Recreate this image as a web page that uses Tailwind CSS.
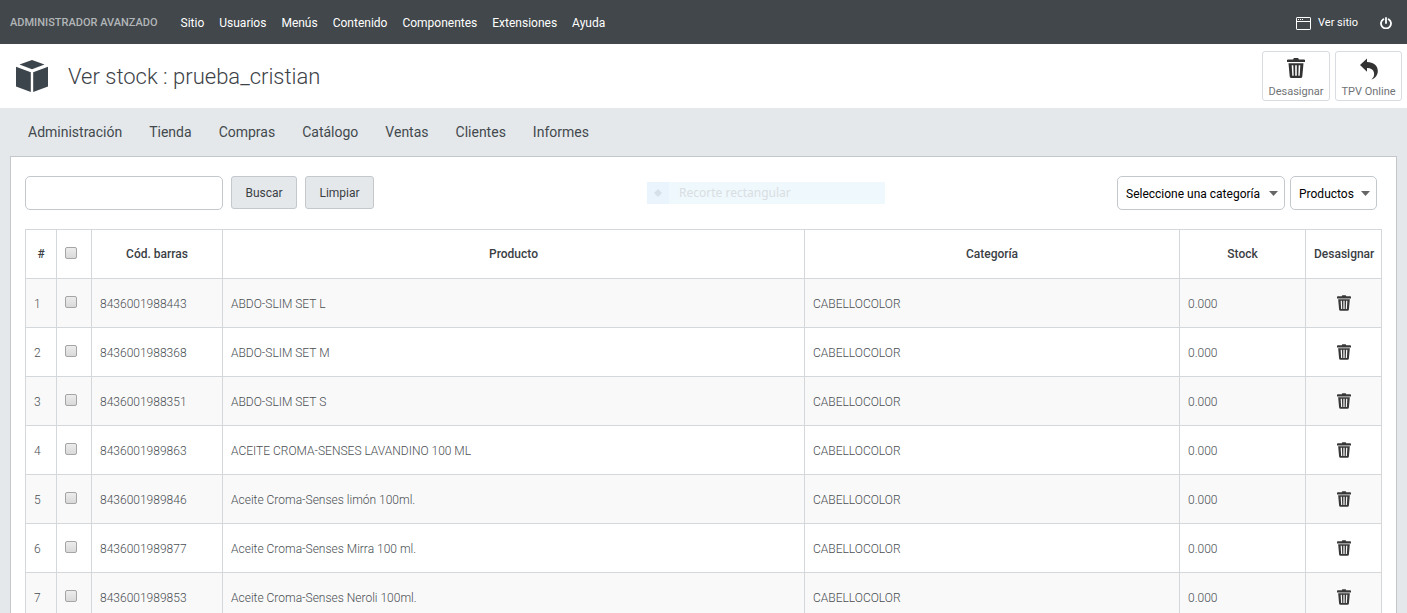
<!DOCTYPE html>
<html lang="es">
<head>
<meta charset="utf-8">
<meta name="viewport" content="width=device-width, initial-scale=1">
<title>Ver stock : prueba_cristian</title>
<script src="https://cdn.jsdelivr.net/npm/@tailwindcss/browser@4"></script>
</head>
<body class="min-h-screen bg-[#e4e8eb] font-['Roboto','Liberation_Sans',sans-serif] text-xs text-[#3b4045]">
<svg class="hidden" aria-hidden="true">
  <symbol id="trash" viewBox="0 0 18 20">
    <path fill="currentColor" fill-rule="evenodd" d="M6.500.5Q6.700 0 7.200 0h3.600q.5 0 .7.500l.300.9h5.200q1 0 1 .9v1.800H0V2.300q0-.9 1-.9h5.200zM1.500 5.300h15L15.300 18.400Q15.100 20 13.600 20H4.400Q2.900 20 2.700 18.400zM4.700 7.200l.6 10.500h1.400L6.300 7.200zM8.200 7.200v10.500h1.600V7.200zM11.700 7.200l-.4 10.500h1.400l.6-10.500z"/>
  </symbol>
</svg>

<header class="flex h-11 items-center bg-[#41474b] pt-0.5 text-white">
  <span class="ml-[10px] text-[11px] font-medium whitespace-nowrap text-[#b3b6b8]">ADMINISTRADOR AVANZADO</span>
  <nav class="ml-[23px] flex gap-[15px]" aria-label="Principal">
    <a href="#">Sitio</a>
    <a href="#">Usuarios</a>
    <a href="#">Menús</a>
    <a href="#">Contenido</a>
    <a href="#">Componentes</a>
    <a href="#">Extensiones</a>
    <a href="#">Ayuda</a>
  </nav>
  <a href="#" class="ml-auto flex items-center gap-[7px] text-[11px]">
    <svg class="h-[13px] w-[15px]" viewBox="0 0 15 13" fill="none" stroke="#fff" aria-hidden="true"><rect x=".5" y=".5" width="14" height="12" rx=".6"/><path d="M1 4.500h13M2 2.500h1M4 2.500h1M6 2.500h1"/></svg>
    Ver sitio
  </a>
  <button type="button" class="mr-[15px] ml-[22px]" aria-label="Cerrar sesión">
    <svg class="block size-3" viewBox="0 0 12 12" fill="none" stroke="#fff" stroke-width="1.800" stroke-linecap="round" aria-hidden="true"><path d="M6 1v5M3.400 2.200a5 5 0 1 0 5.200 0"/></svg>
  </button>
</header>

<div class="flex h-16 items-center bg-white pr-[5px] pl-4">
  <svg class="size-8" viewBox="0 0 32 32" fill="#3d454c" aria-hidden="true"><path d="M16 0l12.500 4.600L16 9.300 3.500 4.600zM0 6.800l14.800 5.500V32L0 26.400zM32 6.800l-14.800 5.500V32L32 26.400z"/></svg>
  <h1 class="ml-5 pt-0.5 text-[22px] leading-7 font-light text-[#3d4247]">Ver stock : prueba_cristian</h1>
  <div class="ml-auto flex gap-[5px] text-[11px] text-[#6f7377]">
    <button type="button" class="flex h-[50px] w-[68px] flex-col items-center justify-between rounded-[3px] border border-[#d8dce0] bg-white pt-[6px] whitespace-nowrap">
      <svg class="h-5 w-[18px] text-[#333]" aria-hidden="true"><use href="#trash"/></svg>
      Desasignar
    </button>
    <button type="button" class="flex h-[50px] w-[67px] flex-col items-center justify-between rounded-[3px] border border-[#d8dce0] bg-white pt-[6px] whitespace-nowrap">
      <svg class="h-[22px] w-[18px]" viewBox="0 0 18 22" fill="#333" aria-hidden="true"><path d="M0 7L7 .5v3.600C13.500 4.300 17.800 7.500 17.800 13c0 4-2.300 7-6.300 8.600 2.400-2.300 3-4.500 2.500-6.800C13.300 11.500 11 10.200 7 10.100v3.700z"/></svg>
      TPV Online
    </button>
  </div>
</div>

<nav class="flex h-12 items-center gap-[27px] px-7 text-sm text-[#43484d]" aria-label="Tienda">
  <a href="#">Administración</a>
  <a href="#">Tienda</a>
  <a href="#">Compras</a>
  <a href="#">Catálogo</a>
  <a href="#">Ventas</a>
  <a href="#">Clientes</a>
  <a href="#">Informes</a>
</nav>

<main class="mx-[10px] border border-[#c3c7cb] bg-white px-[14px] pt-[19px] pb-4">
  <form class="flex items-start pr-[5px]">
    <input type="search" aria-label="Buscar producto" class="h-[34px] w-[198px] rounded-[5px] border border-[#c3c8cd] bg-white px-2">
    <button type="button" class="ml-2 h-[33px] w-[66px] rounded-[3px] border border-[#c3c8cd] bg-[#e5e8eb]">Buscar</button>
    <button type="button" class="ml-2 h-[33px] w-[69px] rounded-[3px] border border-[#c3c8cd] bg-[#e5e8eb]">Limpiar</button>
    <div class="mt-[6px] mr-[232px] ml-auto flex h-[22px] w-[238px] items-center bg-[#eff8fd] font-['Noto_Sans',sans-serif] text-[#d9dee2]">
      <span class="flex h-full w-[22px] items-center justify-center bg-[#e9f4fc]"><svg class="size-2" viewBox="0 0 8 8" fill="#d6e0e8" aria-hidden="true"><path d="M4 0l4 4-4 4-4-4z"/></svg></span>
      <span class="ml-[10px]">Recorte rectangular</span>
    </div>
    <div class="relative text-black">
      <select aria-label="Categoría" class="h-[34px] w-[168px] appearance-none rounded-[5px] border border-[#c3c8cd] bg-white pt-0.5 pl-2"><option>Seleccione una categoría</option></select>
      <svg class="pointer-events-none absolute top-[15px] right-[7px] h-[5px] w-[9px]" viewBox="0 0 9 5" fill="#666" aria-hidden="true"><path d="M0 0h9L4.500 5z"/></svg>
    </div>
    <div class="relative ml-[5px] text-black">
      <select aria-label="Tipo" class="h-[34px] w-[87px] appearance-none rounded-[5px] border border-[#c3c8cd] bg-white pt-0.5 pl-2"><option>Productos</option></select>
      <svg class="pointer-events-none absolute top-[15px] right-[7px] h-[5px] w-[9px]" viewBox="0 0 9 5" fill="#666" aria-hidden="true"><path d="M0 0h9L4.500 5z"/></svg>
    </div>
  </form>

  <table class="mt-[19px] w-full table-fixed border-collapse text-left font-light text-[#4a4f54] [&_input]:mb-0.5 [&_input]:block [&_input]:size-3 [&_input]:appearance-none [&_input]:rounded-[2px] [&_input]:border [&_input]:border-[#a5a5a5] [&_input]:bg-linear-to-b [&_input]:from-[#ececec] [&_input]:to-[#d9d9d9] [&_td]:border [&_td]:border-[#d5d8da] [&_td]:px-2 [&_td:not(:has(input,button))]:pt-0.5 [&_th]:border [&_th]:border-[#d5d8da] [&_th]:px-2 [&_th]:font-medium [&_tr]:h-[49px] [&_button]:mx-auto [&_button]:block [&_button]:text-[#383838]">
    <colgroup>
      <col class="w-[31px]"><col class="w-[35px]"><col class="w-[131px]"><col><col class="w-[375px]"><col class="w-[126px]"><col class="w-[76px]">
    </colgroup>
    <thead>
      <tr class="text-center text-[#3b4045]">
        <th scope="col">#</th>
        <th scope="col"><input type="checkbox" aria-label="Seleccionar todo"></th>
        <th scope="col">Cód. barras</th>
        <th scope="col">Producto</th>
        <th scope="col">Categoría</th>
        <th scope="col">Stock</th>
        <th scope="col">Desasignar</th>
      </tr>
    </thead>
    <tbody class="[&>tr:nth-child(odd)]:bg-[#f9f9f9]">
      <tr><td>1</td><td><input type="checkbox" aria-label="Seleccionar 1"></td><td>8436001988443</td><td>ABDO-SLIM SET L</td><td>CABELLOCOLOR</td><td>0.000</td><td><button type="button" aria-label="Desasignar 1"><svg class="h-4 w-[14px]" aria-hidden="true"><use href="#trash"/></svg></button></td></tr>
      <tr><td>2</td><td><input type="checkbox" aria-label="Seleccionar 2"></td><td>8436001988368</td><td>ABDO-SLIM SET M</td><td>CABELLOCOLOR</td><td>0.000</td><td><button type="button" aria-label="Desasignar 2"><svg class="h-4 w-[14px]" aria-hidden="true"><use href="#trash"/></svg></button></td></tr>
      <tr><td>3</td><td><input type="checkbox" aria-label="Seleccionar 3"></td><td>8436001988351</td><td>ABDO-SLIM SET S</td><td>CABELLOCOLOR</td><td>0.000</td><td><button type="button" aria-label="Desasignar 3"><svg class="h-4 w-[14px]" aria-hidden="true"><use href="#trash"/></svg></button></td></tr>
      <tr><td>4</td><td><input type="checkbox" aria-label="Seleccionar 4"></td><td>8436001989863</td><td>ACEITE CROMA-SENSES LAVANDINO 100 ML</td><td>CABELLOCOLOR</td><td>0.000</td><td><button type="button" aria-label="Desasignar 4"><svg class="h-4 w-[14px]" aria-hidden="true"><use href="#trash"/></svg></button></td></tr>
      <tr><td>5</td><td><input type="checkbox" aria-label="Seleccionar 5"></td><td>8436001989846</td><td>Aceite Croma-Senses limón 100ml.</td><td>CABELLOCOLOR</td><td>0.000</td><td><button type="button" aria-label="Desasignar 5"><svg class="h-4 w-[14px]" aria-hidden="true"><use href="#trash"/></svg></button></td></tr>
      <tr><td>6</td><td><input type="checkbox" aria-label="Seleccionar 6"></td><td>8436001989877</td><td>Aceite Croma-Senses Mirra 100 ml.</td><td>CABELLOCOLOR</td><td>0.000</td><td><button type="button" aria-label="Desasignar 6"><svg class="h-4 w-[14px]" aria-hidden="true"><use href="#trash"/></svg></button></td></tr>
      <tr><td>7</td><td><input type="checkbox" aria-label="Seleccionar 7"></td><td>8436001989853</td><td>Aceite Croma-Senses Neroli 100ml.</td><td>CABELLOCOLOR</td><td>0.000</td><td><button type="button" aria-label="Desasignar 7"><svg class="h-4 w-[14px]" aria-hidden="true"><use href="#trash"/></svg></button></td></tr>
    </tbody>
  </table>
</main>
</body>
</html>
